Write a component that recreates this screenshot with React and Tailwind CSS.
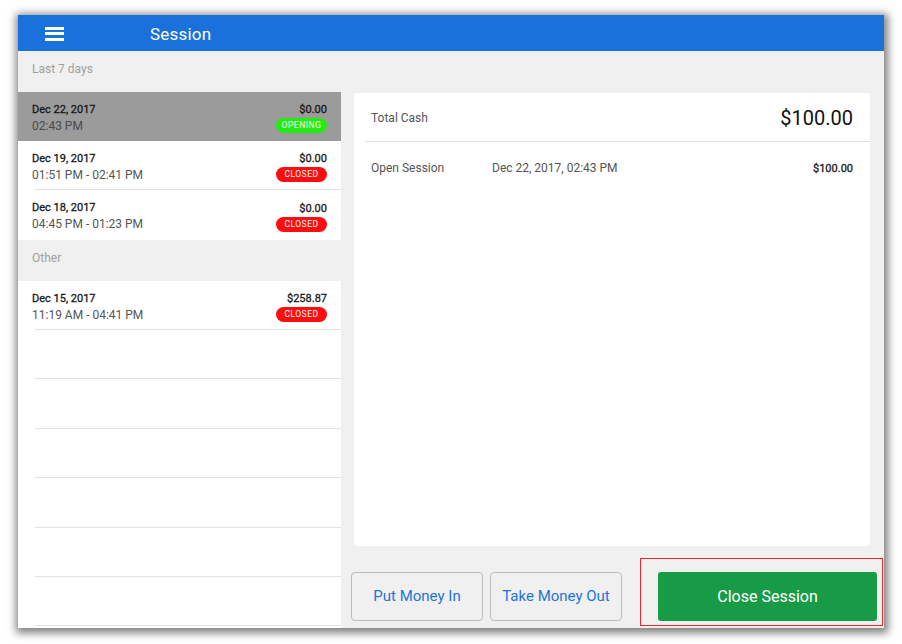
import React from 'react';

const recent = [
  { date: 'Dec 22, 2017', time: '02:43 PM', amount: '$0.00', status: 'OPENING', selected: true },
  { date: 'Dec 19, 2017', time: '01:51 PM - 02:41 PM', amount: '$0.00', status: 'CLOSED', line: true },
  { date: 'Dec 18, 2017', time: '04:45 PM - 01:23 PM', amount: '$0.00', status: 'CLOSED', tall: true },
];

const other = [
  { date: 'Dec 15, 2017', time: '11:19 AM - 04:41 PM', amount: '$258.87', status: 'CLOSED', line: true },
];

// Roboto Medium is not installed, so a thin stroke stands in for weight 500
const medium = 'text-[11px] leading-[15px] text-[#161616] [-webkit-text-stroke:0.3px_#161616]';

function SessionRow({ s }) {
  return (
    <div
      className={`relative flex items-center justify-between pl-[14px] pr-[14px] pt-[2px] ${s.tall ? 'h-[50px]' : 'h-[49px]'} ${
        s.selected ? 'bg-[#9b9b9b]' : 'bg-white'
      }`}
    >
      <div className="flex flex-col gap-[1px]">
        <span className={medium}>{s.date}</span>
        <span className={`text-[12px] leading-[16px] ${s.selected ? 'text-[#4a4a4a]' : 'text-[#555]'}`}>{s.time}</span>
      </div>
      <div className="flex flex-col items-end gap-[1px]">
        <span className={medium}>{s.amount}</span>
        <span
          className={`h-[15px] w-[51px] rounded-full flex items-center justify-center text-[8.5px] tracking-[0.5px] text-white ${
            s.status === 'OPENING' ? 'bg-[#22ec12]' : 'bg-[#fd0d0d]'
          }`}
        >
          {s.status}
        </span>
      </div>
      {s.line && <div className="absolute bottom-0 left-[17px] right-0 h-px bg-[#e2e2e2]" />}
    </div>
  );
}

function EmptyRow() {
  return (
    <div className="h-[49.4px] flex flex-col justify-end">
      <div className="ml-[17px] h-px bg-[#e2e2e2]" />
    </div>
  );
}

export default function App() {
  return (
    <div className="w-[902px] h-[644px] bg-white pt-[15px] pl-[18px]" style={{ fontFamily: 'Roboto, "Liberation Sans", sans-serif' }}>
      <div className="w-[866px] h-[613px] bg-[#f0f0f0] flex flex-col overflow-hidden shadow-[1px_2px_8px_3px_rgba(0,0,0,0.5)]">
        {/* Header */}
        <div className="h-[36px] bg-[#1b71dc] flex items-center shrink-0">
          <div className="ml-[27px] mt-[1px] w-[19px] flex flex-col gap-[2.5px]">
            <div className="h-[3px] bg-white" />
            <div className="h-[3px] bg-white" />
            <div className="h-[3px] bg-white" />
          </div>
          <span className="ml-[86px] mt-[3px] text-[17px] text-white tracking-[0.2px]">Session</span>
        </div>

        <div className="flex flex-1 min-h-0">
          {/* Left list */}
          <div className="w-[323px] flex flex-col bg-white">
            <div className="h-[41px] bg-[#f0f0f0] flex items-center pl-[14px] pb-[6px] text-[12px] text-[#a0a0a0]">Last 7 days</div>
            {recent.map((s, i) => (
              <SessionRow key={i} s={s} />
            ))}
            <div className="h-[41px] bg-[#f0f0f0] flex items-center pl-[14px] pb-[6px] text-[12px] text-[#a0a0a0]">Other</div>
            {other.map((s, i) => (
              <SessionRow key={i} s={s} />
            ))}
            {[0, 1, 2, 3, 4, 5].map((i) => (
              <EmptyRow key={i} />
            ))}
          </div>

          {/* Right detail */}
          <div className="flex-1 flex flex-col pt-[42px]">
            <div className="ml-[13px] mr-[14px] h-[453px] bg-white rounded-[4px]">
              <div className="h-[48px] flex items-center justify-between pl-[17px] pr-[17px] pt-[2px]">
                <span className="text-[12px] text-[#555]">Total Cash</span>
                <span className="text-[20px] text-[#111]">$100.00</span>
              </div>
              <div className="ml-[11px] h-px bg-[#e0e0e0]" />
              <div className="h-[50px] flex items-center pl-[17px] pr-[17px] pt-[2px] text-[12px]">
                <span className="w-[121px] text-[#555]">Open Session</span>
                <span className="text-[#555]">Dec 22, 2017, 02:43 PM</span>
                <span className={`ml-auto ${medium}`}>$100.00</span>
              </div>
            </div>

            <div className="flex items-start pl-[10px]">
              <button className="mt-[26px] w-[132px] h-[49px] rounded-[4px] border border-[#bcbcbc] bg-[#f0f0f0] text-[15px] text-[#1c74dc]">
                Put Money In
              </button>
              <button className="mt-[26px] ml-[7px] w-[132px] h-[49px] rounded-[4px] border border-[#bcbcbc] bg-[#f0f0f0] text-[15px] text-[#1c74dc]">
                Take Money Out
              </button>
              <div className="mt-[12px] ml-auto mr-px w-[243px] h-[68px] border border-[#f0242c] pl-[17px] pr-[5px] pt-[13px]">
                <button className="w-full h-[49px] rounded-[3px] bg-[#179b47] text-[16px] text-white">Close Session</button>
              </div>
            </div>
          </div>
        </div>
      </div>
    </div>
  );
}
